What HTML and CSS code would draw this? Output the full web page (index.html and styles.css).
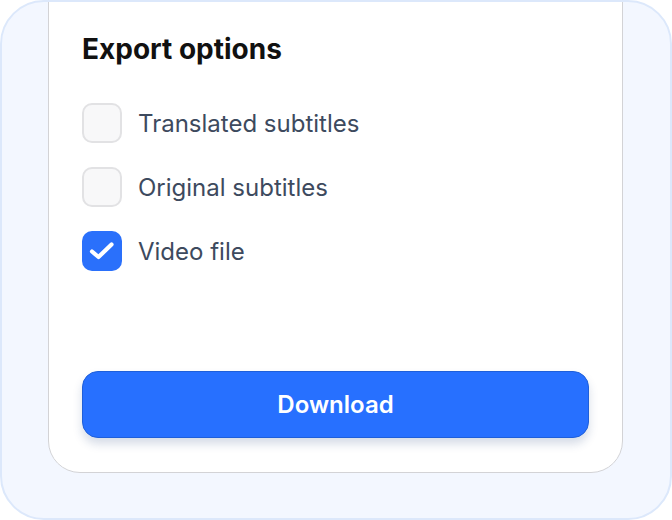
FILE: index.html
```html
<!DOCTYPE html>
<html lang="en">
<head>
<meta charset="utf-8">
<title>Export options</title>
<link rel="stylesheet" href="styles.css">
</head>
<body>
<div class="frame">
  <section class="card">
    <h2 class="title">Export options</h2>
    <ul class="options">
      <li class="option">
        <span class="box"></span>
        <span class="label">Translated subtitles</span>
      </li>
      <li class="option">
        <span class="box"></span>
        <span class="label">Original subtitles</span>
      </li>
      <li class="option">
        <span class="box checked">
          <svg viewBox="0 0 40 40" width="40" height="40" aria-hidden="true"><path d="M10 20.5l6.5 5.5L29.5 13.5" fill="none" stroke="#fff" stroke-width="4.2" stroke-linecap="round" stroke-linejoin="round"/></svg>
        </span>
        <span class="label">Video file</span>
      </li>
    </ul>
    <button class="download" type="button">Download</button>
  </section>
</div>
</body>
</html>
```
FILE: styles.css
```css
* { box-sizing: border-box; }
html, body { margin: 0; padding: 0; }
body {
  font-family: Inter, "Noto Sans", "Liberation Sans", sans-serif;
  background: #ffffff;
}
.frame {
  width: 672px;
  height: 520px;
  border: 2px solid #dce8fb;
  border-radius: 44px;
  background: #f3f7ff;
  overflow: hidden;
  padding: 0 47px 0 46px;
}
.card {
  margin-top: -40px;
  height: 511px;
  background: #ffffff;
  border: 1px solid #d3d3d6;
  border-radius: 32px;
  padding: 69px 33px 0 33px;
  display: flex;
  flex-direction: column;
}
.title {
  margin: 0;
  font-size: 28px;
  line-height: 34px;
  font-weight: 700;
  color: #111111;
}
.options {
  list-style: none;
  margin: 37px 0 0 0;
  padding: 0;
  display: flex;
  flex-direction: column;
  gap: 24px;
}
.option {
  display: flex;
  align-items: center;
  gap: 16px;
  height: 40px;
}
.box {
  width: 40px;
  height: 40px;
  border-radius: 10px;
  border: 2px solid #e2e2e4;
  background: #f8f8f9;
  display: flex;
  align-items: center;
  justify-content: center;
  flex: none;
}
.box.checked {
  background: #2a70fb;
  border: none;
}
.label {
  font-size: 24px;
  color: #3d4a5e;
}
.download {
  margin-top: auto;
  margin-bottom: 34px;
  height: 67px;
  width: 100%;
  border: 1px solid #1f5fd9;
  border-radius: 16px;
  background: #2770ff;
  color: #ffffff;
  font-family: inherit;
  font-size: 24px;
  font-weight: 600;
  box-shadow: 0 6px 10px rgba(30, 60, 120, 0.18);
}
```
